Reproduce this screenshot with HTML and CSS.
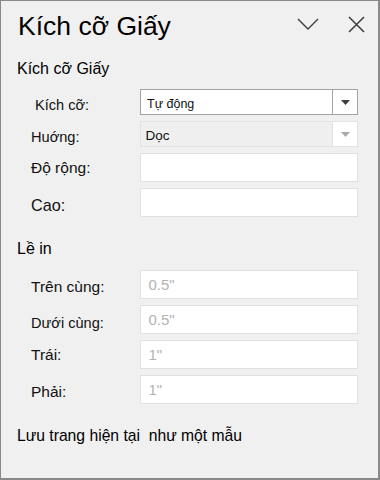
FILE: index.html
```html
<!DOCTYPE html>
<html lang="vi">
<head>
<meta charset="utf-8">
<title>Kích cỡ Giấy</title>
<link rel="stylesheet" href="styles.css">
</head>
<body>
<div class="panel">
  <div class="header">
    <div class="title">Kích cỡ Giấy</div>
    <svg class="ico-chevron" width="22" height="12" viewBox="0 0 22 12"><polyline points="1,1 11,11 21,1" fill="none" stroke="#3c3c3c" stroke-width="1.4"/></svg>
    <svg class="ico-close" width="17" height="17" viewBox="0 0 17 17"><path d="M1 1 L16 16 M16 1 L1 16" fill="none" stroke="#3c3c3c" stroke-width="1.5"/></svg>
  </div>

  <div class="section">
    <div class="sec-title">Kích cỡ Giấy</div>
    <div class="rows rows-top">
      <div class="row short">
        <div class="lbl lbl-s lbl-kc">Kích cỡ:</div>
        <div class="box select">
          <span class="val val-sm">Tự động</span>
          <span class="arrow"><svg width="9" height="5" viewBox="0 0 9 5"><polygon points="0,0 9,0 4.5,5" fill="#3e3e3e"/></svg></span>
        </div>
      </div>
      <div class="row short">
        <div class="lbl lbl-s">Huớng:</div>
        <div class="box select disabled">
          <span class="val val-md">Dọc</span>
          <span class="arrow"><svg width="9" height="5" viewBox="0 0 9 5"><polygon points="0,0 9,0 4.5,5" fill="#aaaaaa"/></svg></span>
        </div>
      </div>
      <div class="row">
        <div class="lbl lbl-c">Độ rộng:</div>
        <div class="box"></div>
      </div>
      <div class="row">
        <div class="lbl lbl-l">Cao:</div>
        <div class="box"></div>
      </div>
    </div>

    <div class="sec-title sec-title-2">Lề in</div>
    <div class="rows rows-bottom">
      <div class="row">
        <div class="lbl">Trên cùng:</div>
        <div class="box"><span class="ph">0.5"</span></div>
      </div>
      <div class="row">
        <div class="lbl lbl-s">Dưới cùng:</div>
        <div class="box"><span class="ph">0.5"</span></div>
      </div>
      <div class="row">
        <div class="lbl lbl-c">Trái:</div>
        <div class="box"><span class="ph">1"</span></div>
      </div>
      <div class="row">
        <div class="lbl">Phải:</div>
        <div class="box"><span class="ph">1"</span></div>
      </div>
    </div>

    <div class="footer">Lưu trang hiện tại&nbsp; như một mẫu</div>
  </div>
</div>
</body>
</html>
```

FILE: styles.css
```css
html, body {
  margin: 0;
  padding: 0;
  background: #f0f0f0;
}

.panel {
  box-sizing: border-box;
  width: 380px;
  height: 480px;
  background: #f0f0f0;
  border-top: 1px solid #8a8a8a;
  border-left: 1px solid #8a8a8a;
  border-right: 2px solid #8a8a8a;
  border-bottom: 2px solid #8a8a8a;
  font-family: "Liberation Sans", Arial, sans-serif;
  color: #111;
}

.header {
  display: flex;
  align-items: flex-start;
  height: 30px;
  padding: 10px 13px 0 17px;
}

.title {
  flex: 1;
  font-size: 26.5px;
  line-height: 30px;
  color: #000;
}

.ico-chevron {
  display: block;
  margin-top: 7px;
}

.ico-close {
  display: block;
  margin-top: 5px;
  margin-left: 29px;
}

.section {
  padding: 0 20px 0 16px;
}

.sec-title {
  margin-top: 17.5px;
  font-size: 16px;
  line-height: 20px;
  color: #000;
}

.sec-title-2 {
  margin-top: 21.5px;
}

.rows {
  display: flex;
  flex-direction: column;
  gap: 6px;
}

.rows-top {
  margin-top: 10.5px;
}

.rows-bottom {
  margin-top: 11.5px;
}

.row {
  display: grid;
  grid-template-columns: 1fr 218px;
  align-items: center;
  height: 29px;
}

.row.short {
  height: 26px;
}

.lbl {
  padding-left: 14px;
  padding-top: 4px;
  font-size: 15.5px;
  line-height: 18px;
  color: #111;
  white-space: nowrap;
}

.lbl-s {
  font-size: 14.6px;
  padding-top: 6px;
}

.lbl-l {
  font-size: 16.2px;
}

.lbl-c {
  padding-top: 0;
}

.lbl-kc {
  padding-left: 18px;
}

.box {
  box-sizing: border-box;
  height: 100%;
  background: #fff;
  border: 1px solid #e0e0e0;
  display: flex;
  align-items: center;
}

.select {
  border-color: #a3a3a3;
}

.select.disabled {
  background: #efefef;
  border-color: #e2e2e2;
}

.val {
  flex: 1;
  color: #111;
  white-space: nowrap;
}

.val-sm {
  font-size: 12.5px;
  line-height: 16px;
  padding-left: 6px;
  padding-top: 3px;
}

.val-md {
  font-size: 13.5px;
  line-height: 16px;
  padding-left: 4.5px;
  padding-top: 4px;
}

.arrow {
  box-sizing: border-box;
  width: 25px;
  height: 100%;
  border-left: 1px solid #a3a3a3;
  background: #fff;
  display: flex;
  align-items: center;
  justify-content: center;
}

.arrow svg {
  display: block;
}

.disabled .arrow {
  border-left-color: #e2e2e2;
}

.ph {
  padding-left: 7.5px;
  padding-top: 1px;
  font-size: 15px;
  line-height: 18px;
  color: #b3b3b3;
}

.footer {
  margin-top: 22px;
  font-size: 15.7px;
  line-height: 20px;
  color: #000;
}
```
